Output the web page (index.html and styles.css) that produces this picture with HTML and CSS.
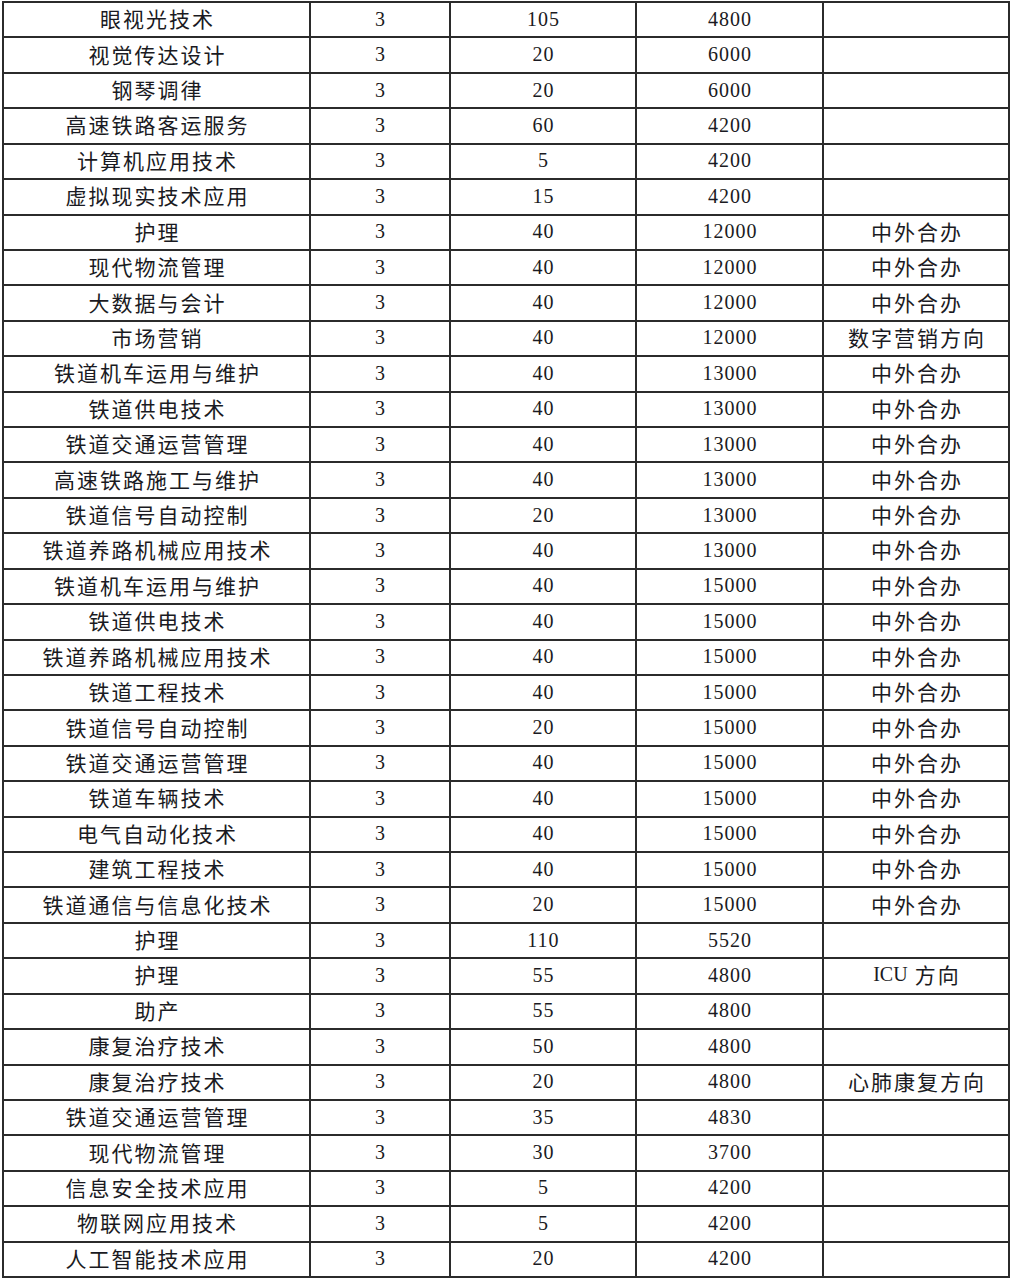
FILE: index.html
```html
<!DOCTYPE html>
<html lang="zh-CN">
<head>
<meta charset="utf-8">
<title>专业表</title>
<link rel="stylesheet" href="styles.css">
</head>
<body>
<div class="sheet">
  <div class="grid" id="grid">
    <div class="c zh">眼视光技术</div><div class="c num">3</div><div class="c num">105</div><div class="c num">4800</div><div class="c zh"></div>
    <div class="c zh">视觉传达设计</div><div class="c num">3</div><div class="c num">20</div><div class="c num">6000</div><div class="c zh"></div>
    <div class="c zh">钢琴调律</div><div class="c num">3</div><div class="c num">20</div><div class="c num">6000</div><div class="c zh"></div>
    <div class="c zh">高速铁路客运服务</div><div class="c num">3</div><div class="c num">60</div><div class="c num">4200</div><div class="c zh"></div>
    <div class="c zh">计算机应用技术</div><div class="c num">3</div><div class="c num">5</div><div class="c num">4200</div><div class="c zh"></div>
    <div class="c zh">虚拟现实技术应用</div><div class="c num">3</div><div class="c num">15</div><div class="c num">4200</div><div class="c zh"></div>
    <div class="c zh">护理</div><div class="c num">3</div><div class="c num">40</div><div class="c num">12000</div><div class="c zh">中外合办</div>
    <div class="c zh">现代物流管理</div><div class="c num">3</div><div class="c num">40</div><div class="c num">12000</div><div class="c zh">中外合办</div>
    <div class="c zh">大数据与会计</div><div class="c num">3</div><div class="c num">40</div><div class="c num">12000</div><div class="c zh">中外合办</div>
    <div class="c zh">市场营销</div><div class="c num">3</div><div class="c num">40</div><div class="c num">12000</div><div class="c zh">数字营销方向</div>
    <div class="c zh">铁道机车运用与维护</div><div class="c num">3</div><div class="c num">40</div><div class="c num">13000</div><div class="c zh">中外合办</div>
    <div class="c zh">铁道供电技术</div><div class="c num">3</div><div class="c num">40</div><div class="c num">13000</div><div class="c zh">中外合办</div>
    <div class="c zh">铁道交通运营管理</div><div class="c num">3</div><div class="c num">40</div><div class="c num">13000</div><div class="c zh">中外合办</div>
    <div class="c zh">高速铁路施工与维护</div><div class="c num">3</div><div class="c num">40</div><div class="c num">13000</div><div class="c zh">中外合办</div>
    <div class="c zh">铁道信号自动控制</div><div class="c num">3</div><div class="c num">20</div><div class="c num">13000</div><div class="c zh">中外合办</div>
    <div class="c zh">铁道养路机械应用技术</div><div class="c num">3</div><div class="c num">40</div><div class="c num">13000</div><div class="c zh">中外合办</div>
    <div class="c zh">铁道机车运用与维护</div><div class="c num">3</div><div class="c num">40</div><div class="c num">15000</div><div class="c zh">中外合办</div>
    <div class="c zh">铁道供电技术</div><div class="c num">3</div><div class="c num">40</div><div class="c num">15000</div><div class="c zh">中外合办</div>
    <div class="c zh">铁道养路机械应用技术</div><div class="c num">3</div><div class="c num">40</div><div class="c num">15000</div><div class="c zh">中外合办</div>
    <div class="c zh">铁道工程技术</div><div class="c num">3</div><div class="c num">40</div><div class="c num">15000</div><div class="c zh">中外合办</div>
    <div class="c zh">铁道信号自动控制</div><div class="c num">3</div><div class="c num">20</div><div class="c num">15000</div><div class="c zh">中外合办</div>
    <div class="c zh">铁道交通运营管理</div><div class="c num">3</div><div class="c num">40</div><div class="c num">15000</div><div class="c zh">中外合办</div>
    <div class="c zh">铁道车辆技术</div><div class="c num">3</div><div class="c num">40</div><div class="c num">15000</div><div class="c zh">中外合办</div>
    <div class="c zh">电气自动化技术</div><div class="c num">3</div><div class="c num">40</div><div class="c num">15000</div><div class="c zh">中外合办</div>
    <div class="c zh">建筑工程技术</div><div class="c num">3</div><div class="c num">40</div><div class="c num">15000</div><div class="c zh">中外合办</div>
    <div class="c zh">铁道通信与信息化技术</div><div class="c num">3</div><div class="c num">20</div><div class="c num">15000</div><div class="c zh">中外合办</div>
    <div class="c zh">护理</div><div class="c num">3</div><div class="c num">110</div><div class="c num">5520</div><div class="c zh"></div>
    <div class="c zh">护理</div><div class="c num">3</div><div class="c num">55</div><div class="c num">4800</div><div class="c zh"><span class="lat">ICU</span>&nbsp;方向</div>
    <div class="c zh">助产</div><div class="c num">3</div><div class="c num">55</div><div class="c num">4800</div><div class="c zh"></div>
    <div class="c zh">康复治疗技术</div><div class="c num">3</div><div class="c num">50</div><div class="c num">4800</div><div class="c zh"></div>
    <div class="c zh">康复治疗技术</div><div class="c num">3</div><div class="c num">20</div><div class="c num">4800</div><div class="c zh">心肺康复方向</div>
    <div class="c zh">铁道交通运营管理</div><div class="c num">3</div><div class="c num">35</div><div class="c num">4830</div><div class="c zh"></div>
    <div class="c zh">现代物流管理</div><div class="c num">3</div><div class="c num">30</div><div class="c num">3700</div><div class="c zh"></div>
    <div class="c zh">信息安全技术应用</div><div class="c num">3</div><div class="c num">5</div><div class="c num">4200</div><div class="c zh"></div>
    <div class="c zh">物联网应用技术</div><div class="c num">3</div><div class="c num">5</div><div class="c num">4200</div><div class="c zh"></div>
    <div class="c zh">人工智能技术应用</div><div class="c num">3</div><div class="c num">20</div><div class="c num">4200</div><div class="c zh"></div>
  </div>
</div>
</body>
</html>
```

FILE: styles.css
```css
html, body {
  margin: 0;
  padding: 0;
  background: #ffffff;
}

.sheet {
  padding: 1px 0 0 2px;
}

.grid {
  display: grid;
  grid-template-columns: 307px 140px 186px 187px 186px;
  grid-template-rows: repeat(36, 1fr);
  height: 1275px;
  width: 1006px;
  border-left: 2px solid #2b2b2b;
  border-top: 2px solid #2b2b2b;
}

.c {
  border-right: 2px solid #2b2b2b;
  border-bottom: 2px solid #2b2b2b;
  display: flex;
  align-items: center;
  justify-content: center;
  color: #1a1a22;
  font-family: "Liberation Serif", "Noto Sans CJK SC", serif;
  white-space: nowrap;
  overflow: hidden;
}

.zh {
  font-size: 21px;
  letter-spacing: 2px;
  padding-left: 2px;
  padding-bottom: 3px;
}

.lat {
  font-size: 20px;
  letter-spacing: 0;
}

.num {
  font-size: 20px;
  letter-spacing: 1px;
  padding-left: 1px;
  padding-bottom: 1px;
}
```
